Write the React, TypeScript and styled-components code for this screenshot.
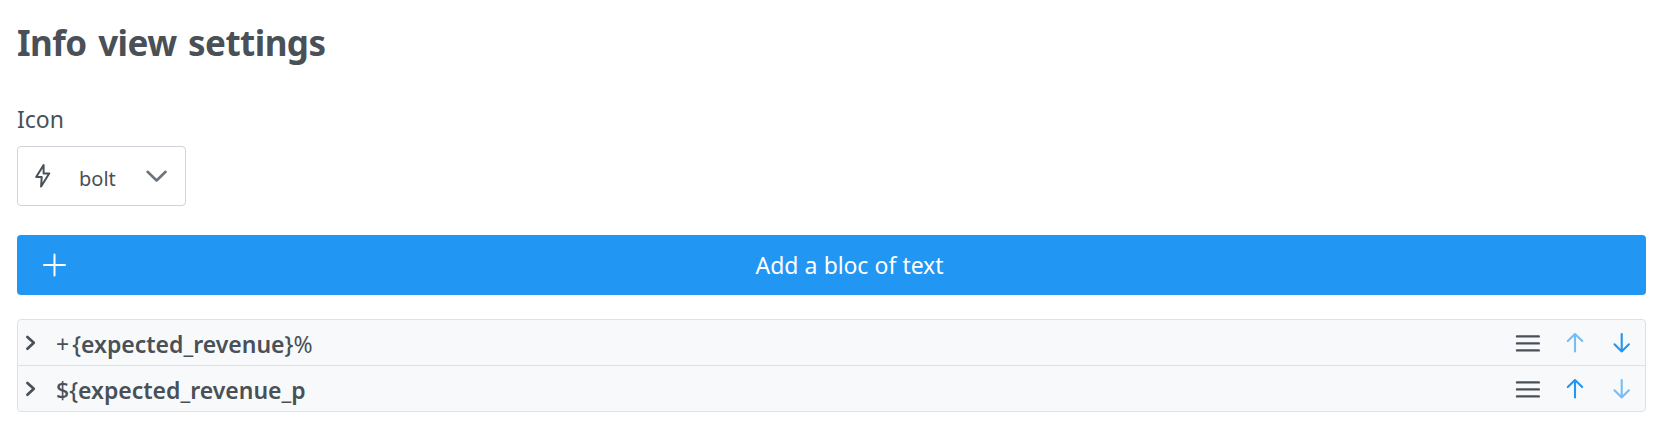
import React from "react";
import styled, { createGlobalStyle } from "styled-components";

const GlobalStyle = createGlobalStyle`
  * { box-sizing: border-box; }
  body {
    margin: 0;
    background: #fff;
    color: #495057;
    font-family: "Noto Sans", sans-serif;
    overflow: hidden;
  }
`;

const Panel = styled.main`
  width: 1665px;
  height: 445px;
  padding: 18px 19px 0 17px;
  display: flex;
  flex-direction: column;
`;

const Title = styled.h1`
  margin: 0;
  height: 50px;
  line-height: 50px;
  font-size: 35px;
  font-weight: 700;
  letter-spacing: -0.55px;
  word-spacing: 3px;
  white-space: nowrap;
`;

const Label = styled.label`
  margin-top: 32px;
  height: 38px;
  line-height: 38px;
  font-size: 23px;
`;

const Select = styled.button`
  margin: 8px 0 0;
  width: 169px;
  height: 60px;
  padding: 0 18px 0 17px;
  display: flex;
  align-items: center;
  border: 1px solid #ced4da;
  border-radius: 4px;
  background: #fff;
  color: #495057;
  font: 400 20px/28px "Noto Sans", sans-serif;
`;

const SelectValue = styled.span`
  flex: 1;
  margin-left: 27px;
  padding-top: 5px;
  text-align: left;
`;

const AddButton = styled.button`
  margin: 29px 0 0;
  height: 60px;
  padding: 0 25px;
  display: flex;
  align-items: center;
  border: 0;
  border-radius: 4px;
  background: #2196f3;
  color: #fff;
  font: 400 23px/34px "Noto Sans", sans-serif;
`;

const AddLabel = styled.span`
  flex: 1;
  padding: 0 0 0 11px;
  text-align: center;
  letter-spacing: -0.1px;
  word-spacing: 0.4px;
`;

const List = styled.ul`
  margin: 24px 0 0;
  padding: 0;
  height: 93px;
  list-style: none;
  border: 1px solid #dee2e6;
  border-radius: 4px;
  background: #f8f9fa;
`;

const Row = styled.li`
  height: 45px;
  padding: 0 14px 0 7px;
  display: flex;
  align-items: center;
  & + & {
    height: 46px;
    border-top: 1px solid #dee2e6;
  }
`;

const RowText = styled.span`
  flex: 1;
  margin-left: 19px;
  padding-top: 4px;
  font-size: 23px;
  line-height: 33px;
  font-weight: 600;
`;

const Light = styled.span<{ $after?: number }>`
  margin-right: ${(p) => p.$after ?? 0}px;
  font-weight: 400;
`;

const Brace = styled.span`
  font-weight: 500;
`;

const Actions = styled.div`
  display: flex;
  align-items: center;
`;

const Move = styled.button<{ $gap: number }>`
  display: flex;
  margin: 0 0 0 ${(p) => p.$gap}px;
  padding: 0;
  border: 0;
  background: none;
  color: #2196f3;
  &:disabled { opacity: 0.6; }
`;

const Icon = styled.svg`
  display: block;
  flex: none;
  fill: none;
  stroke: currentColor;
  stroke-linecap: round;
  stroke-linejoin: round;
`;

const Bolt = () => (
  <Icon width="17" height="26" viewBox="0 0 17 26" strokeWidth="2">
    <path d="M8.6 2 1.2 14H6.7L6.1 23.6 14.2 10.4H8.6Z" />
  </Icon>
);

const ChevronDown = () => (
  <Icon width="22" height="14" viewBox="0 0 22 14" strokeWidth="2.6" color="#6c757d">
    <path d="M2.6 2.8 11.6 11.5 20.6 2.8" />
  </Icon>
);

const Plus = () => (
  <Icon width="25" height="24" viewBox="0 0 25 24" strokeWidth="2">
    <path d="M12.5 1.5V22.5M2 12H23" />
  </Icon>
);

const ChevronRight = () => (
  <Icon width="12" height="21" viewBox="0 0 12 21" strokeWidth="2.7">
    <path d="M2.4 4.9 8.8 10.8 2.4 16.7" />
  </Icon>
);

const Bars = () => (
  <Icon width="26" height="21" viewBox="0 0 26 21" strokeWidth="2.4">
    <path d="M2 4.4H23.8M2 11.4H23.8M2 18.4H23.8" />
  </Icon>
);

const Arrow = ({ down }: { down?: boolean }) => (
  <Icon width="18" height="21" viewBox="0 0 18 21" strokeWidth="2.1">
    <path d={down ? "M8.7 2V19.4M1.5 12.3 8.7 19.4 15.9 12.3" : "M9 19.4V2M1.8 9.1 9 2 16.2 9.1"} />
  </Icon>
);

const BlocRow = ({ children, first, last }: { children: React.ReactNode; first?: boolean; last?: boolean }) => (
  <Row>
    <ChevronRight />
    <RowText>{children}</RowText>
    <Actions>
      <Bars />
      <Move $gap={25} disabled={first} aria-label="Move up"><Arrow /></Move>
      <Move $gap={29} disabled={last} aria-label="Move down"><Arrow down /></Move>
    </Actions>
  </Row>
);

export default function App() {
  return (
    <>
      <GlobalStyle />
      <Panel>
        <Title>Info view settings</Title>
        <Label>Icon</Label>
        <Select>
          <Bolt />
          <SelectValue>bolt</SelectValue>
          <ChevronDown />
        </Select>
        <AddButton>
          <Plus />
          <AddLabel>Add a bloc of text</AddLabel>
        </AddButton>
        <List>
          <BlocRow first>
            <Light $after={3}>+</Light><Brace>{"{"}</Brace>expected_revenue<Brace>{"}"}</Brace><Light>%</Light>
          </BlocRow>
          <BlocRow last><Brace>{"${"}</Brace>expected_revenue_p</BlocRow>
        </List>
      </Panel>
    </>
  );
}
